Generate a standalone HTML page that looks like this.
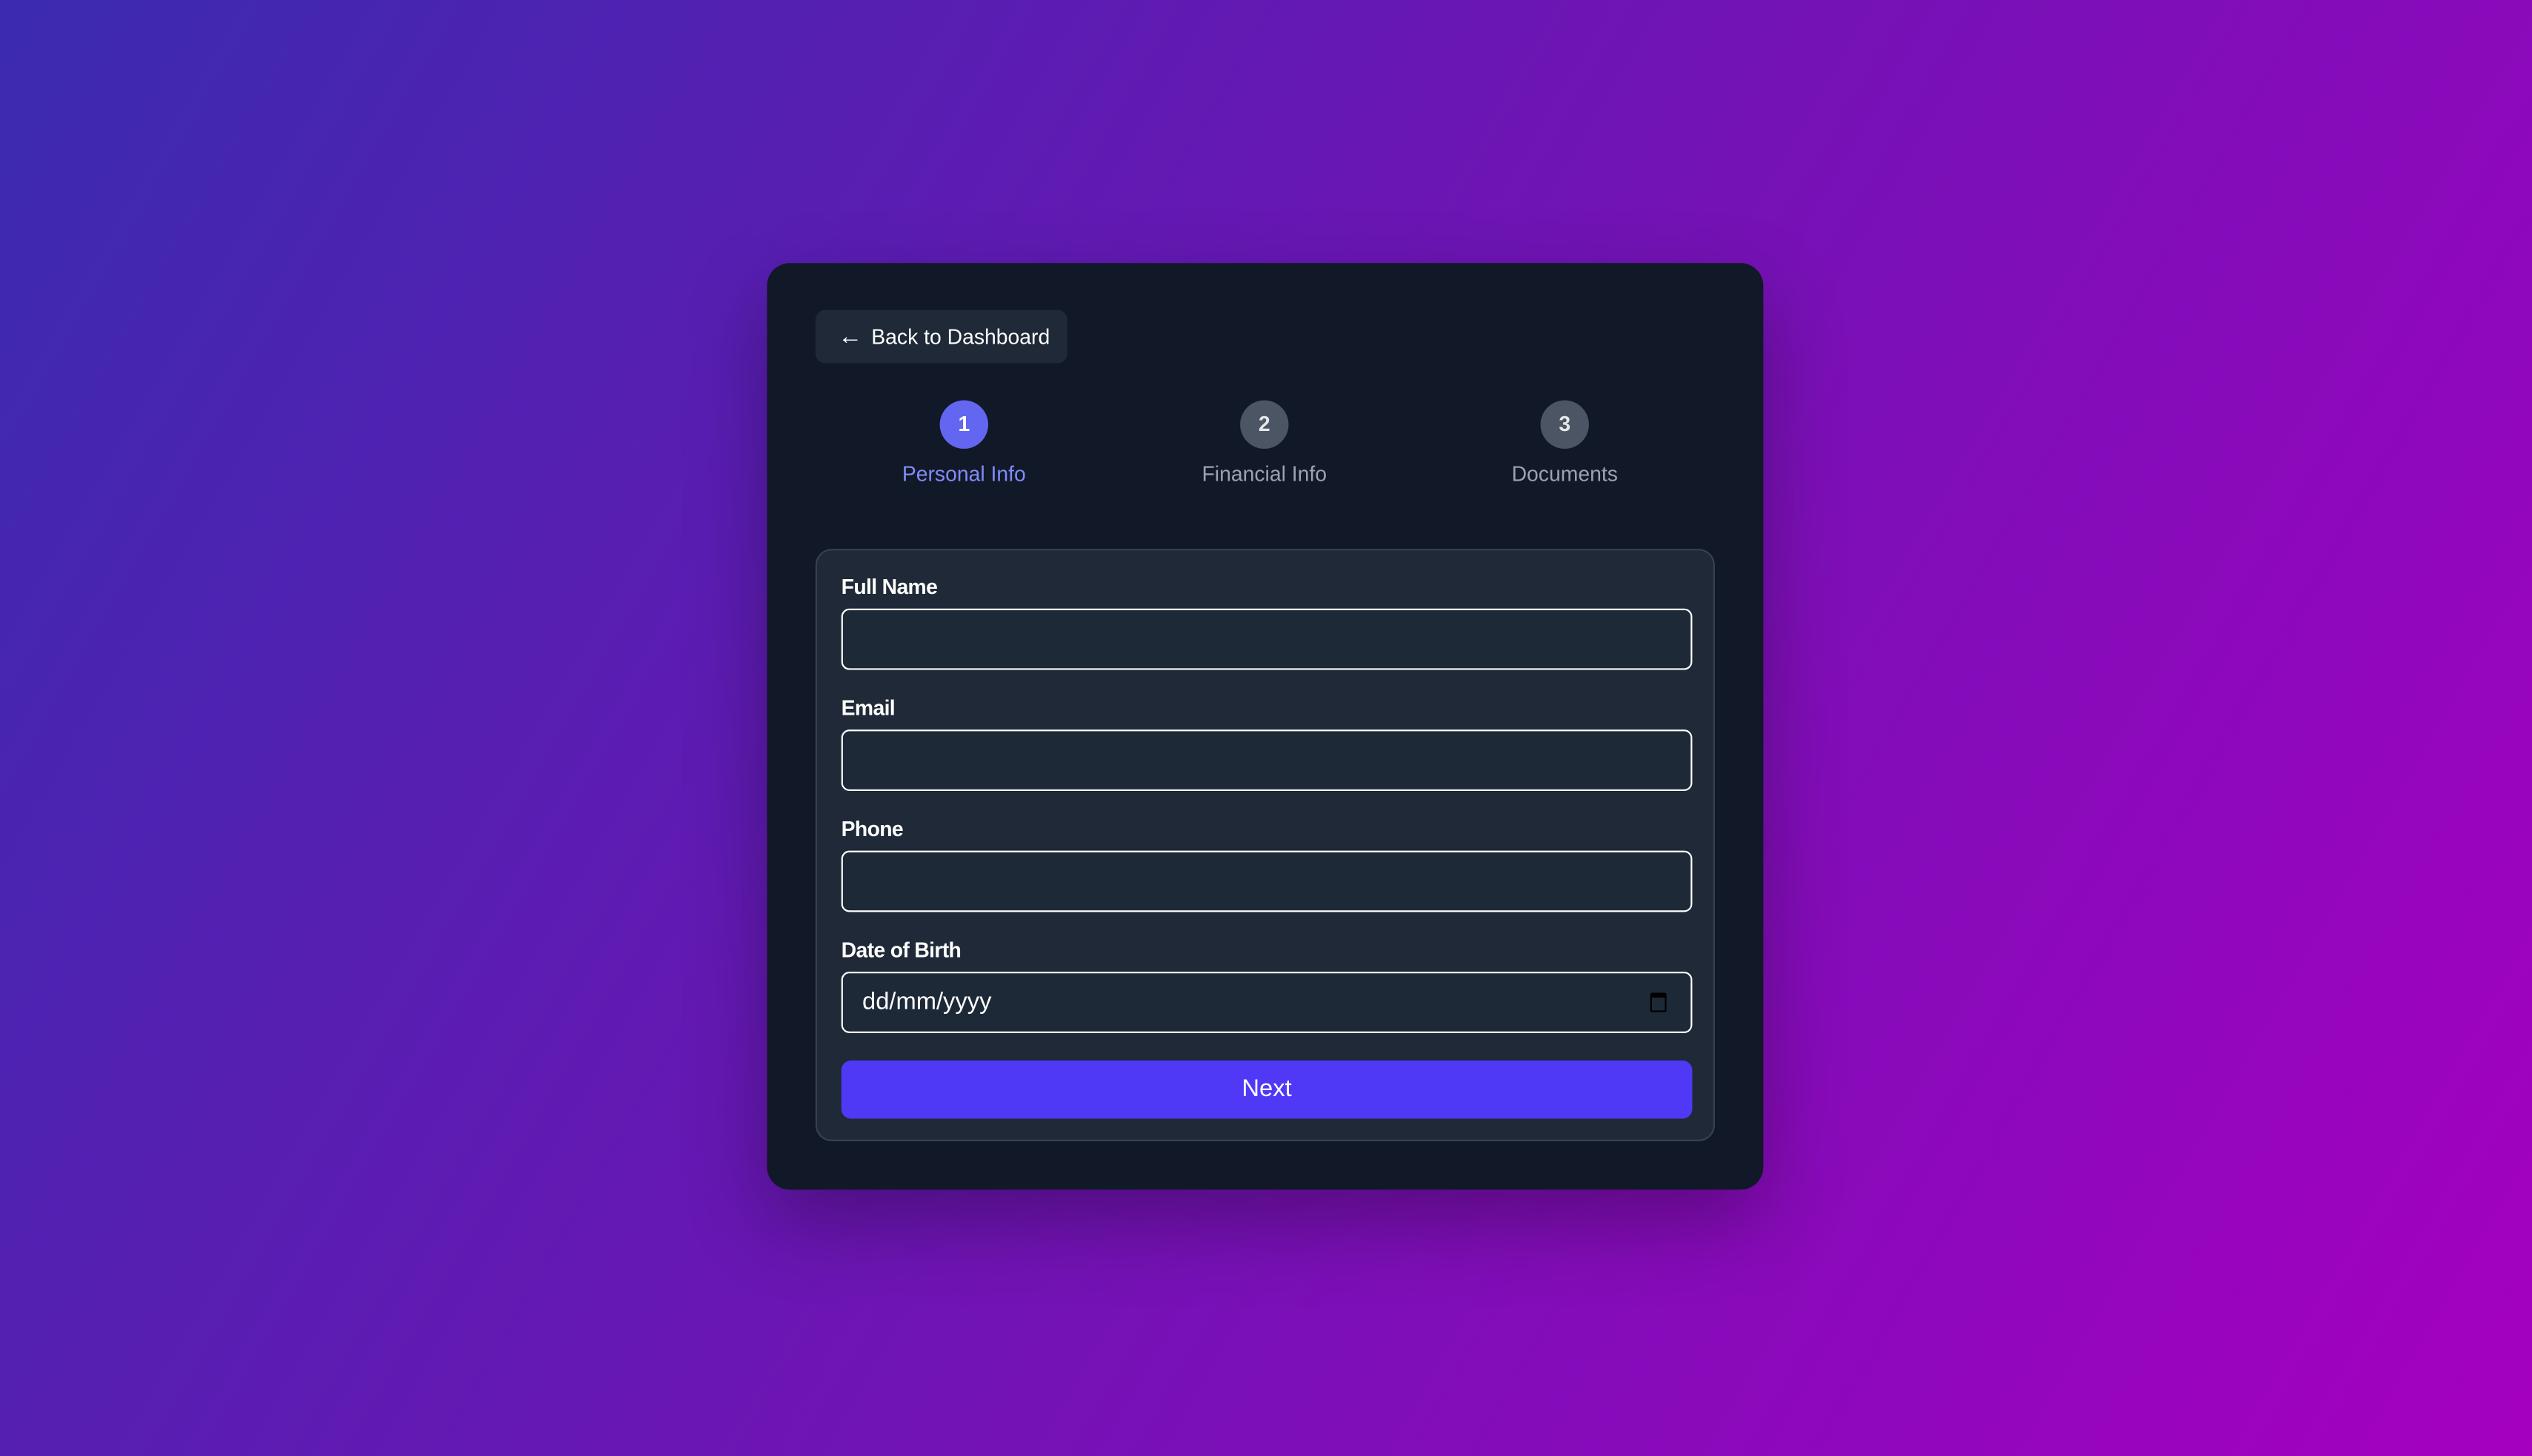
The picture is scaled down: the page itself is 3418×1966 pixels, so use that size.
<!DOCTYPE html>
<html><head><style>
*{box-sizing:border-box;margin:0;padding:0}
html,body{width:3418px;height:1966px;overflow:hidden}
body{background:linear-gradient(120deg,#3b2bb0 0%,#6a16b4 45%,#a500c0 100%);font-family:"Liberation Sans",sans-serif}
#s{width:1568px;height:902px;transform:scale(2.1798,2.1796);transform-origin:0 0;position:relative}
.card{position:absolute;left:475px;top:163px;width:617px;height:574px;background:#111827;border-radius:14px;box-shadow:0 20px 50px rgba(0,0,0,.3)}
.back{position:absolute;left:30px;top:29px;width:156px;height:33px;background:#1f2937;border-radius:6px;color:#fff;font-size:13px;line-height:33px;padding-left:14px}
.back b{font-weight:normal;font-size:15px;margin-right:2px}
.step{position:absolute;top:85px;width:140px;text-align:center}
.c{width:30px;height:30px;border-radius:50%;margin:0 auto;font-size:13px;font-weight:bold;line-height:30px;background:#4b5563;color:#e5e7eb}
.l{margin-top:8px;font-size:13px;color:#9ca3af}
.panel{position:absolute;left:30px;top:177px;width:557px;height:367px;background:#1f2937;border:1px solid #374151;border-radius:10px}
.lab{position:absolute;left:15px;color:#fff;font-size:13px;font-weight:bold;letter-spacing:-.3px}
.in{position:absolute;left:15px;width:527px;height:38px;border:1px solid #fff;border-radius:5px;background:#1e2937}
.btn{position:absolute;left:15px;top:316px;width:527px;height:36px;background:#4f39f6;border-radius:6px;color:#fff;font-size:15px;text-align:center;line-height:36px}
</style></head><body><div id="s">
<div class="card">
<div class="back"><b>←</b> Back to Dashboard</div>
<div class="step" style="left:52px"><div class="c" style="background:#6366f1;color:#fff">1</div><div class="l" style="color:#818cf8">Personal Info</div></div>
<div class="step" style="left:238px"><div class="c">2</div><div class="l">Financial Info</div></div>
<div class="step" style="left:424px"><div class="c">3</div><div class="l">Documents</div></div>
<div class="panel">
<div class="lab" style="top:15px">Full Name</div><div class="in" style="top:36px"></div>
<div class="lab" style="top:90px">Email</div><div class="in" style="top:111px"></div>
<div class="lab" style="top:165px">Phone</div><div class="in" style="top:186px"></div>
<div class="lab" style="top:240px">Date of Birth</div><div class="in" style="top:261px"><span style="position:absolute;left:12px;top:9px;color:#fff;font-size:15px">dd/mm/yyyy</span><span style="position:absolute;right:15px;top:12px;width:10px;height:12px;border:1.5px solid #000;border-top-width:3px;border-radius:1px"></span></div>
<div class="btn">Next</div>
</div>
</div>
</div></body></html>
